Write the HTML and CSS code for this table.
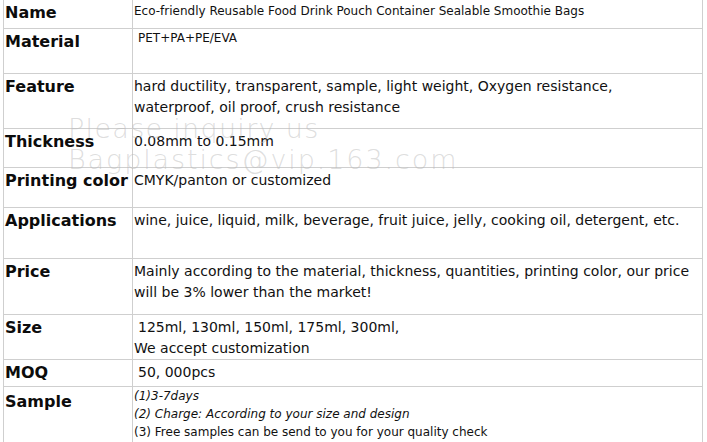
FILE: index.html
```html
<!DOCTYPE html>
<html>
<head>
<meta charset="utf-8">
<link rel="stylesheet" href="styles.css">
</head>
<body>
<div class="wrap">
<table class="spec">
  <tr class="r-name"><th>Name</th><td class="small">Eco-friendly Reusable Food Drink Pouch Container Sealable Smoothie Bags</td></tr>
  <tr class="r-material"><th>Material</th><td class="small indent">PET+PA+PE/EVA</td></tr>
  <tr class="r-feature"><th>Feature</th><td>hard ductility, transparent, sample, light weight, Oxygen resistance,<br>waterproof, oil proof, crush resistance</td></tr>
  <tr class="r-thick"><th>Thickness</th><td>0.08mm to 0.15mm</td></tr>
  <tr class="r-print"><th>Printing color</th><td>CMYK/panton or customized</td></tr>
  <tr class="r-app"><th>Applications</th><td>wine, juice, liquid, milk, beverage, fruit juice, jelly, cooking oil, detergent, etc.</td></tr>
  <tr class="r-price"><th>Price</th><td>Mainly according to the material, thickness, quantities, printing color, our price<br>will be 3% lower than the market!</td></tr>
  <tr class="r-size"><th>Size</th><td><span class="lead">125ml, 130ml, 150ml, 175ml, 300ml,</span><br>We accept customization</td></tr>
  <tr class="r-moq"><th>MOQ</th><td class="indent">50, 000pcs</td></tr>
  <tr class="r-sample"><th>Sample</th><td class="sample"><em>(1)3-7days</em><br><em>(2) Charge: According to your size and design</em><br>(3) Free samples can be send to you for your quality check</td></tr>
</table>
<div class="watermark"><div class="wm1">Please inquiry us</div><div class="wm2">Bagplastics@vip.163.com</div></div>
</div>
</body>
</html>
```
FILE: styles.css
```css
html, body {
  margin: 0;
  padding: 0;
  background: #ffffff;
}
.wrap {
  position: relative;
  padding-left: 3px;
  width: 700px;
  overflow: hidden;
  height: 442px;
}
.spec {
  border-collapse: collapse;
  width: 700px;
  font-family: "DejaVu Sans", Verdana, sans-serif;
  color: #111;
}
.spec th, .spec td {
  border: 1px solid #cfcfcf;
  vertical-align: top;
  text-align: left;
  padding: 2px 1px 0 1px;
}
.spec th {
  width: 126px;
  font-size: 16px;
  font-weight: bold;
  line-height: 21px;
  white-space: nowrap;
  color: #0c0c0c;
}
.spec td {
  font-size: 14px;
  line-height: 21px;
  white-space: nowrap;
}
.spec td.small {
  font-size: 12px;
  line-height: 18px;
}
.spec tr.r-material td { padding-top: 0; }
.spec td.indent { padding-left: 5px; }
.lead { padding-left: 4px; }
.spec td.sample {
  font-size: 12px;
  line-height: 18px;
  padding-top: 0;
}
.spec tr.r-sample th { padding-top: 4px; }
.spec tr:first-child th, .spec tr:first-child td { border-top: none; }
.r-name th { height: 26px; }
.r-material th { height: 42px; }
.r-feature th { height: 52px; }
.r-thick th { height: 36px; }
.r-print th { height: 37px; }
.r-app th { height: 48px; }
.r-price th { height: 53px; }
.r-size th { height: 42px; }
.r-moq th { height: 24px; }
.r-sample th { height: 60px; }
.watermark {
  position: absolute;
  left: 68px;
  top: 113px;
  font-family: "DejaVu Sans", sans-serif;
  font-weight: 200;
  font-size: 27px;
  line-height: 31px;
  color: rgba(185, 185, 185, 0.48);
  pointer-events: none;
}
.wm1 { letter-spacing: 1.3px; }
.wm2 { letter-spacing: 1.9px; }
```
